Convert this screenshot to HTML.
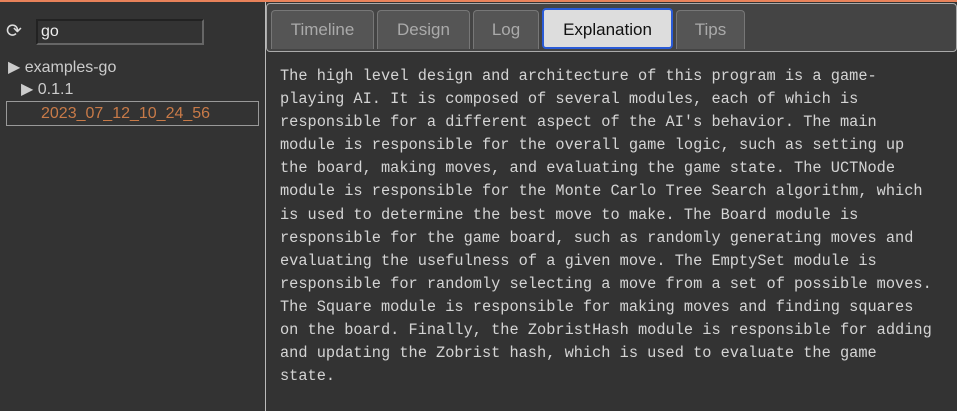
<!DOCTYPE html>
<html><head><style>
body{margin:0;width:957px;height:411px;background:#333;overflow:hidden;font-family:"Liberation Sans",sans-serif;position:relative}
.top{position:absolute;left:0;top:0;width:957px;height:2px;background:#e8825a}
.vl{position:absolute;left:265px;top:2px;width:1px;height:409px;background:#bbb}
.ref{position:absolute;left:6px;top:20px;color:#ddd;font-size:19px}
.inp{position:absolute;left:36px;top:19px;width:161px;height:22px;border:2px solid #666;border-top-color:#222;border-left-color:#222;background:#333;color:#eee;font-size:16px;line-height:22px;padding-left:3px;box-sizing:content-box}
.t{position:absolute;color:#ccc;font-size:16px}
.sel{position:absolute;left:6px;top:101px;width:253px;height:25px;border:1px solid #999;color:#c87a48;font-size:16px;line-height:24px;box-sizing:border-box;padding-left:34px}
.bar{position:absolute;left:266px;top:3px;width:689px;height:47px;background:#444;border:1px solid #aaa;border-radius:4px}
.tab{position:absolute;top:10px;height:39px;background:#555;border:1px solid #777;border-bottom:none;border-radius:4px 4px 0 0;color:#aaa;font-size:17px;text-align:center;line-height:38px;box-sizing:border-box}
.act{background:#ddd;color:#111;border:2px solid #2a5bd7;border-radius:4px;height:41px;top:8px;line-height:40px}
.txt{position:absolute;left:280px;top:65px;width:675px;font-family:"Liberation Mono",monospace;font-size:15.3px;line-height:23.1px;color:#d4d4d4;white-space:pre}
</style></head><body>
<div class="top"></div>
<div class="ref">⟳</div>
<div class="inp">go</div>
<div class="t" style="left:8px;top:57px">▶ examples-go</div>
<div class="t" style="left:21px;top:79px">▶ 0.1.1</div>
<div class="sel">2023_07_12_10_24_56</div>
<div class="vl"></div>
<div class="bar"></div>
<div class="tab" style="left:271px;width:103px">Timeline</div>
<div class="tab" style="left:377px;width:93px">Design</div>
<div class="tab" style="left:473px;width:66px">Log</div>
<div class="tab act" style="left:542px;width:131px">Explanation</div>
<div class="tab" style="left:676px;width:69px">Tips</div>
<div class="txt">The high level design and architecture of this program is a game-
playing AI. It is composed of several modules, each of which is
responsible for a different aspect of the AI's behavior. The main
module is responsible for the overall game logic, such as setting up
the board, making moves, and evaluating the game state. The UCTNode
module is responsible for the Monte Carlo Tree Search algorithm, which
is used to determine the best move to make. The Board module is
responsible for the game board, such as randomly generating moves and
evaluating the usefulness of a given move. The EmptySet module is
responsible for randomly selecting a move from a set of possible moves.
The Square module is responsible for making moves and finding squares
on the board. Finally, the ZobristHash module is responsible for adding
and updating the Zobrist hash, which is used to evaluate the game
state.</div>
</body></html>
